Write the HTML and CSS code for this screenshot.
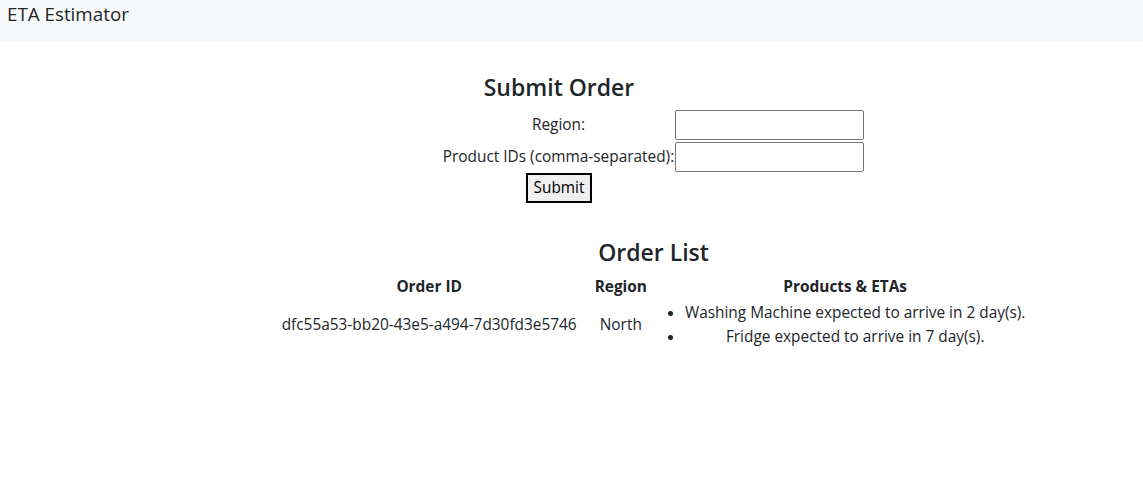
FILE: index.html
```html
<!DOCTYPE html>
<html lang="en">
<head>
<meta charset="utf-8">
<title>ETA Estimator</title>
<link rel="stylesheet" href="styles.css">
</head>
<body>
<header class="navbar"><span class="brand">ETA Estimator</span></header>
<main class="main">
  <form class="order-form">
    <h2 class="title">Submit Order</h2>
    <span></span>
    <label class="label" for="region">Region:</label>
    <input class="field" id="region" type="text">
    <label class="label" for="products">Product IDs (comma-separated):</label>
    <input class="field" id="products" type="text">
    <div class="actions"><button class="btn" type="button">Submit</button></div>
  </form>
  <table class="orders">
    <caption class="title">Order List</caption>
    <thead>
      <tr><th>Order ID</th><th>Region</th><th>Products &amp; ETAs</th></tr>
    </thead>
    <tbody>
      <tr>
        <td>dfc55a53-bb20-43e5-a494-7d30fd3e5746</td>
        <td>North</td>
        <td>
          <ul class="etas">
            <li>Washing Machine expected to arrive in 2 day(s).</li>
            <li>Fridge expected to arrive in 7 day(s).</li>
          </ul>
        </td>
      </tr>
    </tbody>
  </table>
</main>
</body>
</html>
```
FILE: styles.css
```css
* { box-sizing: border-box; }
body {
  margin: 0;
  font-family: "Open Sans", "Noto Sans", sans-serif;
  font-size: 15.4px;
  line-height: 24px;
  color: #212529;
  background: #fff;
}
.navbar {
  background: #f8f9fa;
  padding: 2px 7px 14px;
}
.brand {
  display: block;
  font-size: 18.8px;
  line-height: 25px;
}
.main {
  padding: 32px 0 0 164px;
  text-align: center;
}
.order-form {
  display: inline-grid;
  grid-template-columns: auto auto;
  row-gap: 2px;
  align-items: center;
}
.title {
  margin: 0;
  font-size: 23px;
  line-height: 29px;
  font-weight: 600;
}
.order-form .title { margin-bottom: 6px; }
.label {
  padding-right: 1px;
}
.field {
  width: 189px;
  height: 30px;
  border: 1px solid #767676;
  border-radius: 2px;
  font: inherit;
  margin: 0;
}
.actions {
  text-align: center;
  margin-top: -1px;
}
.btn {
  font: inherit;
  font-size: 15.4px;
  line-height: 22px;
  height: 30px;
  padding: 1px 6px;
  border: 2px solid #000;
  background: #efefef;
  color: #000;
  margin: 0;
}
.orders {
  margin: 35px auto 0;
  border-spacing: 2px;
}
.orders caption.title {
  padding-bottom: 6px;
}
.orders th, .orders td {
  padding: 0 8px;
  text-align: center;
  vertical-align: middle;
}
.orders th { font-weight: 700; }
.etas {
  margin: 0;
  padding-left: 20px;
}
```
